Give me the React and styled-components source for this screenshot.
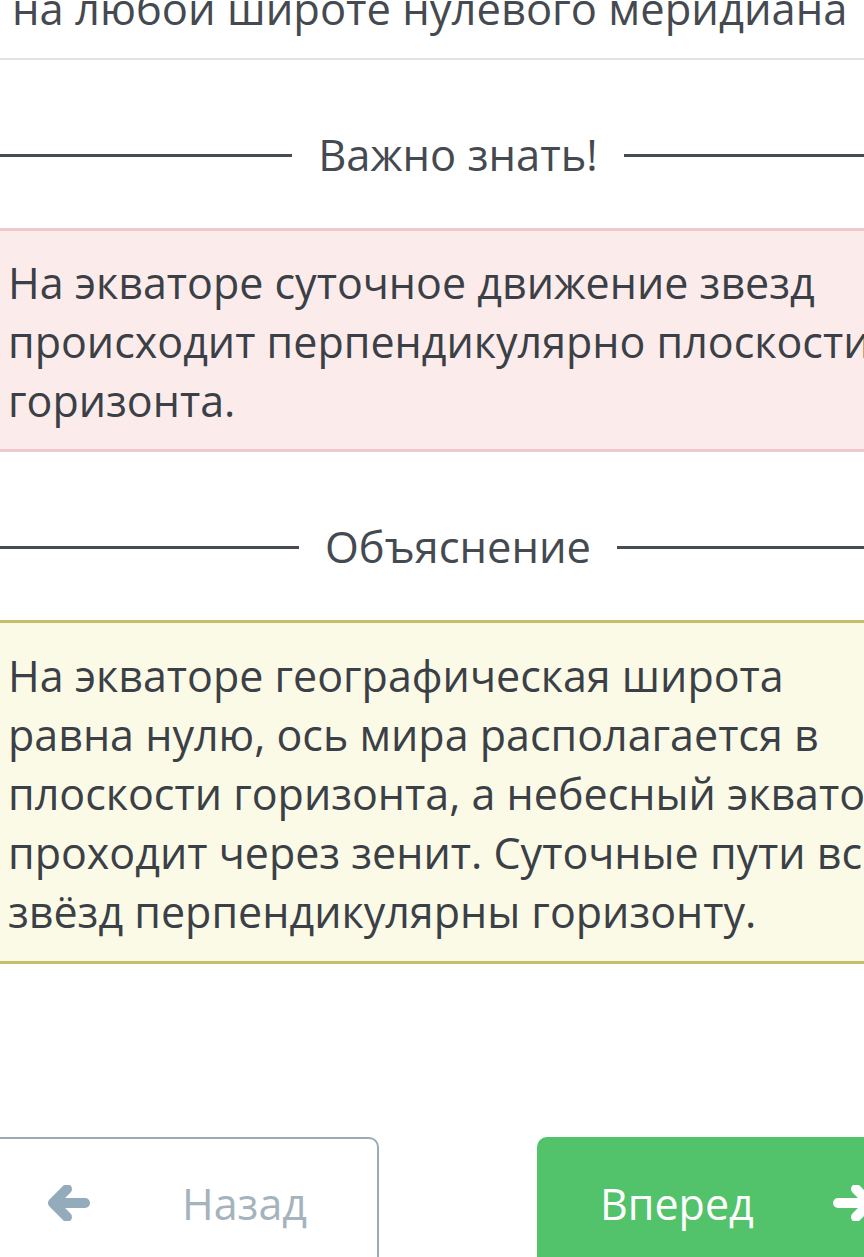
import React from 'react'
import styled, { createGlobalStyle } from 'styled-components'

const GlobalStyle = createGlobalStyle`
  html, body {
    margin: 0;
    padding: 0;
    background: #fff;
    overflow: hidden;
  }
  body {
    font-family: "Open Sans", "Noto Sans", sans-serif;
    color: #3c4147;
  }
`

function ArrowIcon({ dir, color }) {
  const d = dir === 'left'
    ? 'M38 18 H6 M20 4 L6 18 L20 32'
    : 'M6 18 H38 M24 4 L38 18 L24 32'
  return (
    <svg width="44" height="36" viewBox="0 0 44 36">
      <path d={d} fill="none" stroke={color} strokeWidth="10"
        strokeLinecap="round" strokeLinejoin="round" />
    </svg>
  )
}

function App() {
  return (
    <Page>
      <GlobalStyle />
      <QuestionTail>на любой широте нулевого меридиана</QuestionTail>

      <Divider>
        <Line />
        <DividerTitle>Важно знать!</DividerTitle>
        <Line />
      </Divider>
      <NoteBox $kind="important">
        На экваторе суточное движение звезд<br />
        происходит перпендикулярно плоскости<br />
        горизонта.
      </NoteBox>

      <Divider>
        <Line />
        <DividerTitle>Объяснение</DividerTitle>
        <Line />
      </Divider>
      <NoteBox $kind="explain">
        На экваторе географическая широта<br />
        равна нулю, ось мира располагается в<br />
        плоскости горизонта, а небесный экватор<br />
        проходит через зенит. Суточные пути всех<br />
        звёзд перпендикулярны горизонту.
      </NoteBox>

      <ButtonRow>
        <NavButton $variant="back">
          <ArrowIcon dir="left" color="#94abbc" />
          <span>Назад</span>
        </NavButton>
        <NavButton $variant="next">
          <span>Вперед</span>
          <ArrowIcon dir="right" color="#ffffff" />
        </NavButton>
      </ButtonRow>
    </Page>
  )
}

export default App

const Page = styled.div`
  width: 916px;
  display: flex;
  flex-direction: column;
`

const QuestionTail = styled.div`
  margin-top: -21px;
  padding: 0 0 20px 12px;
  font-size: 43.5px;
  line-height: 59px;
  color: #454a50;
  white-space: nowrap;
  border-bottom: 2px solid #e0e4e6;
`

const Divider = styled.div`
  display: flex;
  align-items: center;
  height: 60px;
  margin: 65px 0 43px;
`

const Line = styled.div`
  flex: 1;
  height: 3px;
  background: #474c52;
`

const DividerTitle = styled.div`
  margin: 0 26px;
  font-size: 43.5px;
  line-height: 60px;
  color: #454a50;
`

const NoteBox = styled.div`
  padding: ${p => p.$kind === 'important' ? '22px 0 19px 8px' : '23px 0 20px 8px'};
  font-size: 43px;
  line-height: 59px;
  white-space: nowrap;
  color: #3b4046;
  background: ${p => p.$kind === 'important' ? '#fbeceb' : '#fbfae6'};
  border-top: 3px solid ${p => p.$kind === 'important' ? '#efc8cc' : '#c4bd6b'};
  border-bottom: 3px solid ${p => p.$kind === 'important' ? '#efc8cc' : '#c4bd6b'};
`

const ButtonRow = styled.div`
  display: grid;
  grid-template-columns: 1fr 1fr;
  gap: 158px;
  margin: 173px -40px 0;
`

const NavButton = styled.div`
  height: 132px;
  box-sizing: border-box;
  display: flex;
  align-items: center;
  justify-content: space-between;
  border-radius: 10px;
  font-size: 43px;
  padding: ${p => p.$variant === 'back' ? '0 70px 0 85px' : '0 78px 0 61px'};
  color: ${p => p.$variant === 'back' ? '#a5b3bd' : '#ffffff'};
  background: ${p => p.$variant === 'back' ? '#ffffff' : '#52c26b'};
  border: 2px solid ${p => p.$variant === 'back' ? '#9aabb6' : '#52c26b'};
`
